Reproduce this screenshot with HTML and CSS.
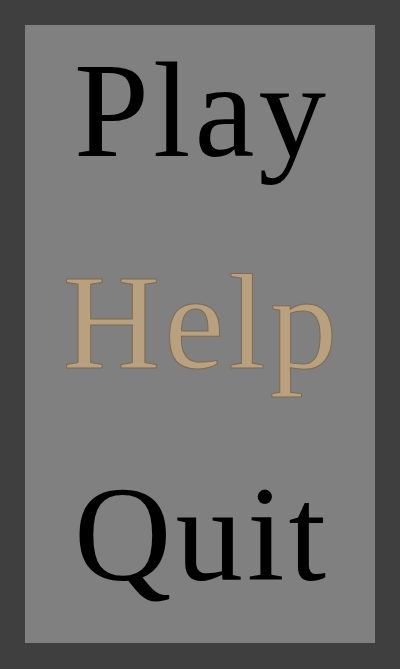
FILE: index.html
```html
<!DOCTYPE html>
<html>
<head>
<meta charset="utf-8">
<link rel="stylesheet" href="styles.css">
</head>
<body>
<div class="screen">
  <nav class="menu">
    <div class="item">Play</div>
    <div class="item active">Help</div>
    <div class="item">Quit</div>
  </nav>
</div>
</body>
</html>
```
FILE: styles.css
```css
html, body {
  margin: 0;
  padding: 0;
  background: #3f3f3f;
}
.screen {
  width: 400px;
  height: 669px;
  box-sizing: border-box;
  padding: 25px 25px 26px 25px;
  background: #3f3f3f;
}
.menu {
  height: 100%;
  background: #808080;
  display: flex;
  flex-direction: column;
  align-items: center;
  gap: 78px;
  padding-top: 19px;
  box-sizing: border-box;
}
.item {
  font-family: "Liberation Serif", serif;
  font-size: 135px;
  line-height: 134px;
  height: 134px;
  letter-spacing: 4px;
  padding-left: 4px;
  color: #000;
}
.item.active {
  color: #b9a07e;
  -webkit-text-stroke: 1px #7e6a54;
}
```
